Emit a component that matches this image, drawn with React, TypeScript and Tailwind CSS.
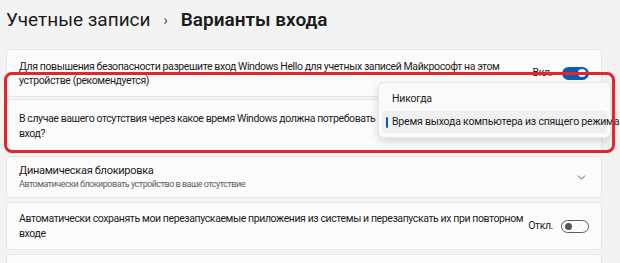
import { ChevronDown } from "lucide-react";

function Toggle({ on }: { on: boolean }) {
  return on ? (
    <div className="flex h-[13px] w-[27px] shrink-0 items-center justify-end rounded-full bg-[#0b5cb8] pr-[3px]">
      <div className="h-[8px] w-[8px] rounded-full bg-white" />
    </div>
  ) : (
    <div className="flex h-[13px] w-[28px] shrink-0 items-center rounded-full border border-[#5d5d5d] bg-[#fbfbfb] pl-[3px]">
      <div className="h-[7px] w-[7px] rounded-full bg-[#555555]" />
    </div>
  );
}

function Card({ className, children }: { className: string; children: React.ReactNode }) {
  return (
    <div
      className={`flex items-center rounded-[4px] border border-[#e6e6e6] bg-[#fbfbfb] pl-[12px] pr-[12px] ${className}`}
    >
      {children}
    </div>
  );
}

export default function App() {
  return (
    <div className="relative h-[263px] w-[620px] overflow-hidden bg-[#f3f3f3] font-['Segoe_UI',Roboto,'Liberation_Sans',sans-serif] text-[#1b1b1b]">
      <h1 className="ml-[6px] mt-[6px] flex h-[28px] items-center text-[19px] leading-[28px]">
        <span>Учетные записи</span>
        <span className="mx-[13px] text-[14px] text-[#444]">›</span>
        <span className="font-semibold">Варианты входа</span>
      </h1>

      <div className="ml-[6px] mt-[15px] flex w-[596px] flex-col text-[10.5px] tracking-[-0.4px]">
        <Card className="h-[48px]">
          <div className="flex-1 whitespace-nowrap pt-[1px] leading-[14px]">
            Для повышения безопасности разрешите вход Windows Hello для учетных записей Майкрософт на этом
            <br />
            устройстве (рекомендуется)
          </div>
          <span className="mr-[10px] shrink-0">Вкл.</span>
          <Toggle on />
        </Card>

        <Card className="mt-[2px] h-[53px]">
          <div className="w-[358px] overflow-hidden whitespace-nowrap leading-[15px]">
            В случае вашего отсутствия через какое время Windows должна потребовать вы
            <br />
            вход?
          </div>
        </Card>

        <Card className="mt-[4px] h-[42px]">
          <div className="flex-1">
            <div className="text-[11px] leading-[14px] tracking-[-0.3px]">Динамическая блокировка</div>
            <div className="text-[9px] leading-[13px] tracking-[-0.5px] text-[#5f5f5f]">
              Автоматически блокировать устройство в ваше отсутствие
            </div>
          </div>
          <ChevronDown className="mr-[1px] h-[13px] w-[13px] shrink-0 text-[#333]" strokeWidth={1.5} />
        </Card>

        <Card className="mt-[4px] h-[48px]">
          <div className="flex-1 whitespace-nowrap leading-[15px]">
            Автоматически сохранять мои перезапускаемые приложения из системы и перезапускать их при повторном
            <br />
            входе
          </div>
          <span className="mr-[8px] shrink-0">Откл.</span>
          <Toggle on={false} />
        </Card>

        <Card className="mt-[4px] h-[30px]">
          <div />
        </Card>
      </div>

      <div className="absolute left-[378px] top-[82px] flex h-[56px] w-[233px] flex-col rounded-[6px] border border-[#e8e8e8] bg-[#fafafa] px-[3px] py-[4px] text-[10.5px] tracking-[-0.2px] shadow-[0_4px_10px_rgba(0,0,0,0.14)]">
        <div className="flex h-[24px] items-center pl-[10px]">Никогда</div>
        <div className="relative mt-[1px] flex h-[23px] items-center whitespace-nowrap rounded-[4px] bg-[#f0f0f0] pl-[10px]">
          <div className="absolute left-[4px] top-[6px] h-[11px] w-[2px] rounded-full bg-[#0b5cb8]" />
          Время выхода компьютера из спящего режима
        </div>
      </div>

      <div className="absolute left-[4px] top-[72px] h-[81px] w-[611px] rounded-[8px] border-[3px] border-[#e1262c]" />
    </div>
  );
}
